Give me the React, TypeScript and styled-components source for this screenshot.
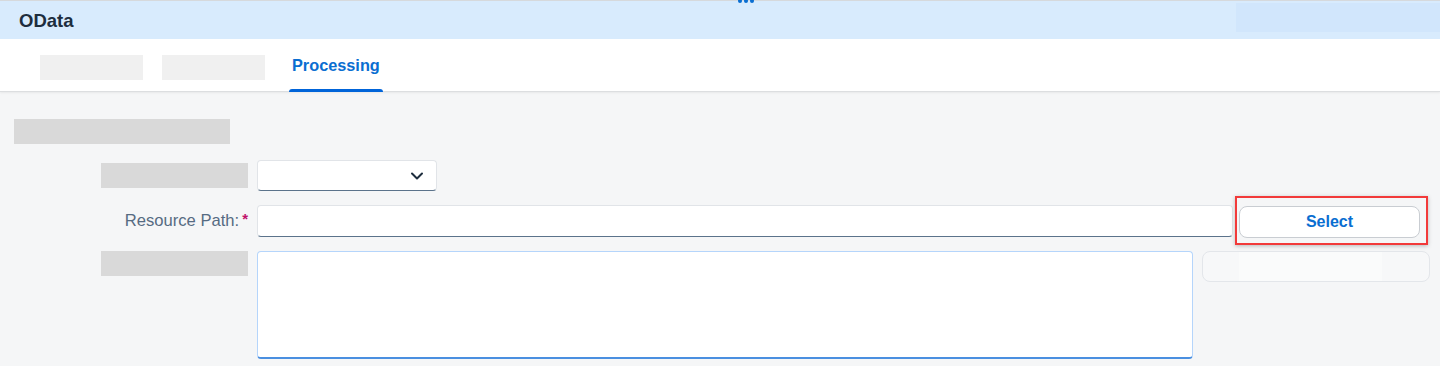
import React from "react";
import styled, { createGlobalStyle } from "styled-components";

const Global = createGlobalStyle`
  html, body { margin: 0; padding: 0; }
  body { background: #f5f6f7; font-family: "Liberation Sans", Arial, sans-serif; }
`;

const Page = styled.div`
  width: 1440px;
  height: 366px;
  overflow: hidden;
  background: #f5f6f7;
  position: relative;
`;

const Header = styled.header`
  height: 38px;
  border-top: 1px solid #d6d9dc;
  background: #d8ebfd;
  display: flex;
  align-items: center;
  justify-content: space-between;
  position: relative;
`;

const Title = styled.h1`
  margin: 2px 0 0 19px;
  font-size: 18.5px;
  font-weight: 700;
  color: #1d2d3e;
`;

const HeaderBlock = styled.div`
  width: 204px;
  height: 29px;
  align-self: flex-start;
  margin-top: 2px;
  background: #d1e6fc;
`;

const Dots = styled.div`
  position: absolute;
  top: -2px;
  left: 738px;
  display: flex;
  gap: 2px;
  span {
    width: 4px;
    height: 4px;
    border-radius: 50%;
    background: #0a6ed1;
  }
`;

const TabBar = styled.nav`
  height: 52px;
  background: #fff;
  display: flex;
  align-items: stretch;
  padding-left: 40px;
  gap: 19px;
  box-shadow: 0 1px 0 #dcdee0, 0 2px 2px rgba(0,0,0,0.06);
  position: relative;
`;

const TabPlaceholder = styled.div`
  width: 103px;
  height: 25px;
  margin-top: 16px;
  background: #f0f0f0;
`;

const Tab = styled.div<{ $active?: boolean }>`
  position: relative;
  padding: 0 3px;
  margin-left: 5px;
  display: flex;
  align-items: flex-start;
  padding-top: 17px;
  font-size: 16.3px;
  font-weight: 700;
  color: #0a6ed1;
  &::after {
    content: "";
    position: absolute;
    left: 0;
    right: 0;
    bottom: -1px;
    height: 3px;
    border-radius: 3px 3px 0 0;
    background: ${(p) => (p.$active ? "#0064d9" : "transparent")};
  }
`;

const Content = styled.main`
  padding: 28px 0 0 14px;
`;

const SectionTitle = styled.div`
  width: 216px;
  height: 25px;
  background: #d9d9d9;
`;

const Form = styled.div`
  margin-top: 16px;
  display: flex;
  flex-direction: column;
  gap: 14px;
`;

const Row = styled.div<{ $align?: string }>`
  display: flex;
  align-items: ${(p) => p.$align || "center"};
`;

const LabelCell = styled.div`
  width: 234px;
  display: flex;
  justify-content: flex-end;
  margin-right: 9px;
`;

const LabelPlaceholder = styled.div`
  width: 147px;
  height: 25px;
  background: #d9d9d9;
`;

const Label = styled.label`
  font-size: 16.6px;
  color: #556b82;
  display: flex;
  align-items: center;
  span {
    font-weight: 700;
    margin-left: 3px;
    margin-top: -5px;
    font-size: 15px;
    color: #c0126b;
  }
`;

const Field = styled.div<{ $w: number; $h?: number }>`
  box-sizing: border-box;
  width: ${(p) => p.$w}px;
  height: ${(p) => p.$h || 32}px;
  background: #fff;
  border: 1px solid #e1e4e8;
  border-bottom: 1px solid #5b738b;
  border-radius: 4px;
  display: flex;
  align-items: center;
  justify-content: flex-end;
  padding-right: 12px;
`;

const TextArea = styled.div`
  box-sizing: border-box;
  width: 936px;
  height: 108px;
  background: #fff;
  border: 1px solid #b5d5fb;
  border-bottom: 2px solid #4a8fe0;
  border-radius: 4px;
`;

const Highlight = styled.div`
  margin-left: 2px;
  padding: 8px 6px 5px 2px;
  border: 2px solid #f23a3a;
  box-shadow: 0 1px 4px rgba(0,0,0,0.25);
  margin-top: -9px;
  margin-bottom: -8px;
`;

const Button = styled.button`
  box-sizing: border-box;
  width: 181px;
  height: 32px;
  border: 1px solid #c9cdd2;
  border-radius: 8px;
  background: #fff;
  color: #0a6ed1;
  font-family: inherit;
  font-weight: 700;
  font-size: 16px;
  padding: 0;
`;

const GhostButton = styled.div`
  box-sizing: border-box;
  width: 228px;
  height: 31px;
  margin-left: 9px;
  border: 1px solid #e3e6ea;
  border-radius: 8px;
  background: linear-gradient(90deg, #f7f8f9 0 16%, #fafbfb 16% 79%, #f7f8f9 79%);
`;

const Chevron = () => (
  <svg width="14" height="10" viewBox="0 0 14 10">
    <path d="M2 2.5 L7 7.5 L12 2.5" fill="none" stroke="#1d2d3e" strokeWidth="2" strokeLinecap="round" strokeLinejoin="round" />
  </svg>
);

export default function App() {
  return (
    <Page>
      <Global />
      <Header>
        <Dots><span /><span /><span /></Dots>
        <Title>OData</Title>
        <HeaderBlock />
      </Header>
      <TabBar>
        <TabPlaceholder />
        <TabPlaceholder />
        <Tab $active>Processing</Tab>
      </TabBar>
      <Content>
        <SectionTitle />
        <Form>
          <Row>
            <LabelCell><LabelPlaceholder /></LabelCell>
            <Field $w={180} $h={31}><Chevron /></Field>
          </Row>
          <Row>
            <LabelCell><Label>Resource Path:<span>*</span></Label></LabelCell>
            <Field $w={976} />
            <Highlight><Button>Select</Button></Highlight>
          </Row>
          <Row $align="flex-start">
            <LabelCell><LabelPlaceholder /></LabelCell>
            <TextArea />
            <GhostButton />
          </Row>
        </Form>
      </Content>
    </Page>
  );
}
